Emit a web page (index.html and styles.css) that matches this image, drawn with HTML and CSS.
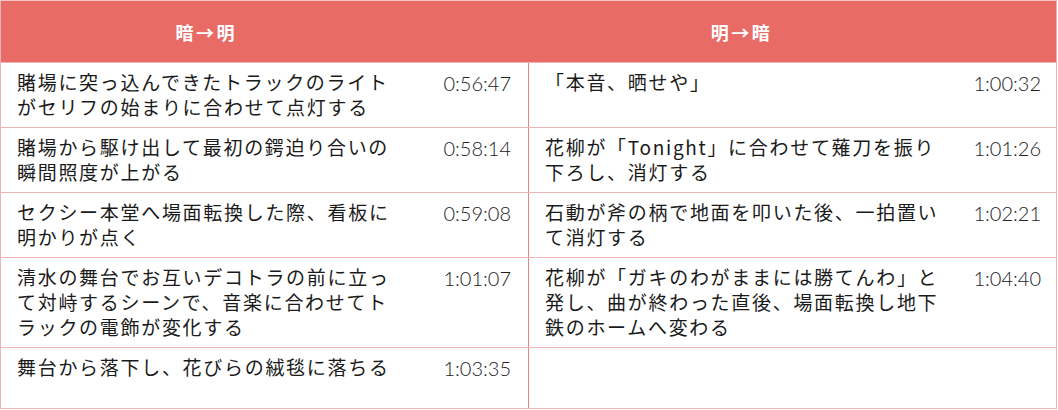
FILE: index.html
```html
<!DOCTYPE html>
<html lang="ja">
<head>
<meta charset="utf-8">
<title>暗転・明転</title>
<link rel="stylesheet" href="styles.css">
</head>
<body>
<table class="cues">
  <colgroup>
    <col class="c-text-l">
    <col class="c-time-l">
    <col class="c-text-r">
    <col class="c-time-r">
  </colgroup>
  <thead>
    <tr class="head-row">
      <th class="head">暗→明</th>
      <th class="head head-time"></th>
      <th class="head">明→暗</th>
      <th class="head head-time"></th>
    </tr>
  </thead>
  <tbody>
    <tr>
      <td class="desc">賭場に突っ込んできたトラックのライトがセリフの始まりに合わせて点灯する</td>
      <td class="time time-l">0:56:47</td>
      <td class="desc">「本音、晒せや」</td>
      <td class="time time-r">1:00:32</td>
    </tr>
    <tr>
      <td class="desc">賭場から駆け出して最初の鍔迫り合いの瞬間照度が上がる</td>
      <td class="time time-l">0:58:14</td>
      <td class="desc">花柳が「Tonight」に合わせて薙刀を振り下ろし、消灯する</td>
      <td class="time time-r">1:01:26</td>
    </tr>
    <tr>
      <td class="desc">セクシー本堂へ場面転換した際、看板に明かりが点く</td>
      <td class="time time-l">0:59:08</td>
      <td class="desc">石動が斧の柄で地面を叩いた後、一拍置いて消灯する</td>
      <td class="time time-r">1:02:21</td>
    </tr>
    <tr>
      <td class="desc">清水の舞台でお互いデコトラの前に立って対峙するシーンで、音楽に合わせてトラックの電飾が変化する</td>
      <td class="time time-l">1:01:07</td>
      <td class="desc">花柳が「ガキのわがままには勝てんわ」と発し、曲が終わった直後、場面転換し地下鉄のホームへ変わる</td>
      <td class="time time-r">1:04:40</td>
    </tr>
    <tr class="last">
      <td class="desc">舞台から落下し、花びらの絨毯に落ちる</td>
      <td class="time time-l">1:03:35</td>
      <td class="desc"></td>
      <td class="time time-r"></td>
    </tr>
  </tbody>
</table>
</body>
</html>
```

FILE: styles.css
```css
html, body {
  margin: 0;
  padding: 0;
  background: #ffffff;
}

body {
  font-family: "Noto Sans CJK JP", "Noto Sans", sans-serif;
  color: #1a1a1a;
}

.cues {
  border-collapse: collapse;
  table-layout: fixed;
  width: 1056px;
}

.c-text-l { width: 411px; }
.c-time-l { width: 117px; }
.c-text-r { width: 426px; }
.c-time-r { width: 102px; }

.cues td {
  border-top: 1px solid #efb4b4;
  border-bottom: 1px solid #efb4b4;
  border-left: 0;
  border-right: 0;
  vertical-align: top;
}

.cues .head {
  height: 61px;
  padding: 0;
  background: #e96b66;
  border: 0;
  border-top: 1px solid #f3c4c4;
  border-bottom: 1px solid #efb4b4;
  color: #ffffff;
  font-size: 18px;
  font-weight: 700;
  letter-spacing: 2.5px;
  text-align: center;
  vertical-align: middle;
}

.cues .head:first-child { border-left: 1px solid #efb4b4; }
.cues .head:last-child { border-right: 1px solid #efb4b4; }

.cues .desc {
  padding: 6px 8px 8px 16px;
  font-size: 19px;
  line-height: 25px;
  letter-spacing: 1.7px;
  text-align: left;
}

.cues .desc:first-child {
  border-left: 1px solid #efb4b4;
}

.cues .time {
  padding: 8px 17px 0 0;
  font-family: "Lato", "Liberation Sans", sans-serif;
  font-weight: 300;
  font-size: 20px;
  line-height: 24px;
  text-align: right;
  color: #222222;
}

.cues .time-l {
  border-right: 1px solid #e98282;
}

.cues .time-r {
  padding-right: 15px;
  border-right: 1px solid #efb4b4;
}

.cues .last td {
  height: 46px;
}
```
